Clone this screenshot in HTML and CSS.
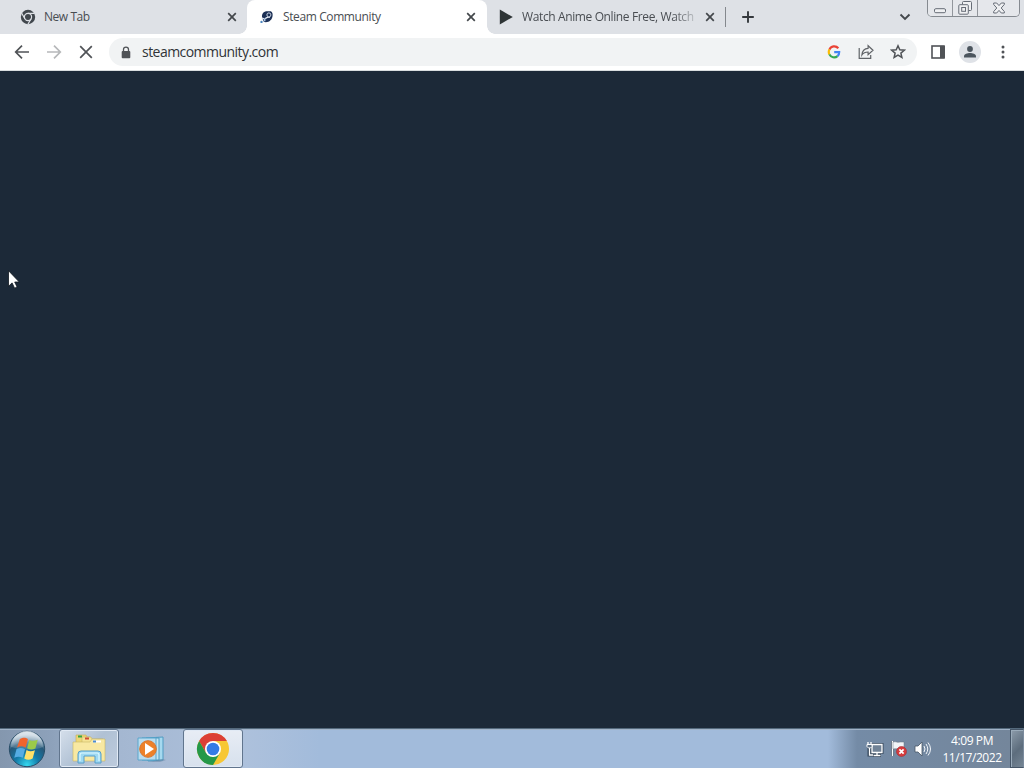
FILE: index.html
```html
<!DOCTYPE html>
<html lang="en">
<head>
<meta charset="utf-8">
<title>Steam Community</title>
<link rel="stylesheet" href="styles.css">
</head>
<body>
<div class="desktop">
  <header class="tabstrip">
    <div class="tab tab-first">
      <svg class="favicon" viewBox="0 0 16 16"><circle cx="8" cy="8" r="7.2" fill="#41474d"/><circle cx="8" cy="8" r="3.6" fill="none" stroke="#dee1e6" stroke-width="1.2"/><path d="M8 4.4h6.5M4.9 9.8L1.7 4.3M11.1 9.8L7.9 15.3" stroke="#dee1e6" stroke-width="1.2"/><circle cx="8" cy="8" r="2.3" fill="#41474d"/></svg>
      <span class="tab-title title-new">New Tab</span>
      <svg class="tab-close" viewBox="0 0 10 10"><path d="M1.2 1.2l7.6 7.6M8.8 1.2L1.2 8.8"/></svg>
    </div>
    <div class="tab tab-active">
      <svg class="favicon" viewBox="0 0 16 16"><path d="M3 8C2.800 4.400 5 2.300 8 2.300h3.800c1.500.8 2 2.300 1.800 4.200-.3 4-3.100 6.700-6.800 6.700-1 0-1.700-.3-2.300-1z" fill="#1b2f55"/><path d="M2.600 9l3 .9 3.200-1.700 2.200-.2" fill="none" stroke="#e5ecf5" stroke-width="1.300"/><circle cx="9.900" cy="5.900" r="2" fill="#1b2f55" stroke="#dce4f0" stroke-width=".9"/><circle cx="5.600" cy="11" r="1.200" fill="#dce6f2" stroke="#395d91" stroke-width=".7"/><circle cx="2.500" cy="12.900" r="1.200" fill="#4c85bd"/></svg>
      <span class="tab-title title-steam">Steam Community</span>
      <svg class="tab-close" viewBox="0 0 10 10"><path d="M1.2 1.2l7.6 7.6M8.8 1.2L1.2 8.8"/></svg>
    </div>
    <div class="tab tab-last">
      <svg class="favicon" viewBox="0 0 16 16"><path d="M1.800.5v15L14.800 8z" fill="#2e3436"/></svg>
      <span class="tab-title title-anime">Watch Anime Online Free, Watch</span>
      <svg class="tab-close" viewBox="0 0 10 10"><path d="M1.2 1.2l7.6 7.6M8.8 1.2L1.2 8.8"/></svg>
    </div>
    <span class="tab-divider"></span>
    <svg class="new-tab" viewBox="0 0 14 14"><path d="M7 1.2v11.6M1.2 7h11.6"/></svg>
    <svg class="tab-search" viewBox="0 0 12 8"><path d="M1.5 1.5L6 6l4.5-4.5"/></svg>
    <div class="window-buttons">
      <span class="wb wb-min"><svg width="14" height="6" viewBox="0 0 14 6"><rect x="1.5" y=".7" width="11" height="4" rx="1.3"/></svg></span>
      <span class="wb wb-max"><svg width="14" height="14" viewBox="0 0 14 14"><path d="M4.5 3.5v-2a1 1 0 0 1 1-1h7a1 1 0 0 1 1 1v7a1 1 0 0 1-1 1h-2"/><rect x=".8" y="3.7" width="9.500" height="9.500" rx="1"/><rect x="3.700" y="6.500" width="3.800" height="3.800"/></svg></span>
      <span class="wb wb-close"><svg width="12" height="12" viewBox="0 0 12 12"><path d="M.7 1h3L6 3.6 8.3 1h3v1.5L8.2 6l3.1 3.5V11h-3L6 8.4 3.7 11h-3V9.500L3.800 6 .7 2.500z"/></svg></span>
    </div>
  </header>

  <nav class="toolbar">
    <svg class="nav-icon" viewBox="0 0 16 16"><path d="M15 8H2M8 1.700L1.700 8 8 14.300"/></svg>
    <svg class="nav-icon nav-disabled" viewBox="0 0 16 16"><path d="M1 8h13M8 1.700L14.300 8 8 14.300"/></svg>
    <svg class="nav-icon" viewBox="0 0 16 16"><path d="M2.200 2.200l11.600 11.600M13.800 2.200L2.200 13.800"/></svg>
    <div class="omnibox">
      <svg class="lock" viewBox="0 0 10 13"><path d="M2.500 5.500V3.600a2.500 2.500 0 0 1 5 0v1.900" fill="none" stroke="#505357" stroke-width="1.300"/><rect x=".7" y="4.900" width="8.600" height="7.300" rx="1" fill="#505357"/></svg>
      <span class="url">steamcommunity.com</span>
      <svg class="google" viewBox="0 0 14 14"><g fill="none" stroke-width="2.200"><path d="M11.300 3.300A5.200 5.200 0 0 0 2.400 4.600" stroke="#ea4335"/><path d="M2.400 4.600a5.200 5.200 0 0 0 0 4.800" stroke="#fbbc05"/><path d="M2.400 9.400a5.200 5.200 0 0 0 8.100 1.700" stroke="#34a853"/><path d="M7.200 7.100h5a5.200 5.200 0 0 1-1.700 4" stroke="#4285f4"/></g></svg>
      <svg class="share" viewBox="0 0 16 16"><path d="M1.200 4v10.300h11.500v-3.200M3.900 11c.3-4.200 2.500-6.500 6.200-6.700V1.700L15 6.200l-4.900 4.400V8C7.200 8 5.300 8.900 3.900 11z"/></svg>
      <svg class="star" viewBox="0 0 16 16"><path d="M8 1.800l1.800 4 4.500.4-3.400 2.900 1 4.400L8 11.200l-3.900 2.300 1-4.400-3.400-2.900 4.500-.4z"/></svg>
    </div>
    <svg class="side-panel" viewBox="0 0 14 14"><rect x="1" y="1" width="12" height="12" fill="none" stroke="#505357" stroke-width="1.600"/><path d="M9 1h5v12H9z" fill="#505357"/></svg>
    <span class="avatar"><svg width="14" height="14" viewBox="0 0 14 14"><circle cx="7" cy="4" r="2.900" fill="#4c555e"/><path d="M1 12.500v-1.300C1 9.100 4.500 8 7 8s6 1.100 6 3.200v1.300z" fill="#4c555e"/></svg></span>
    <svg class="menu" viewBox="0 0 4 14"><circle cx="2" cy="2" r="1.500"/><circle cx="2" cy="7" r="1.500"/><circle cx="2" cy="12" r="1.500"/></svg>
  </nav>

  <main class="page"></main>

  <footer class="taskbar">
    <svg class="start" viewBox="0 0 38 38">
      <defs><radialGradient id="orb" cx=".5" cy=".95" r=".85"><stop offset="0" stop-color="#35d8ef"/><stop offset=".4" stop-color="#137aa8"/><stop offset=".75" stop-color="#275878"/><stop offset="1" stop-color="#9eb7ca"/></radialGradient><linearGradient id="gloss" x2="0" y2="1"><stop stop-color="#fff" stop-opacity=".7"/><stop offset="1" stop-color="#fff" stop-opacity=".1"/></linearGradient></defs>
      <circle cx="19" cy="19" r="17.700" fill="url(#orb)" stroke="#294e68"/>
      <path d="M3 17a16 16 0 0 1 32 0c-9 4-22 3-32 0z" fill="url(#gloss)"/>
      <g transform="translate(-2.500 -2.500) scale(1.150)">
      <path d="M12.500 10c3-1.800 5-1.300 7 0l-2 7.500c-2.500-1.500-4.700-1.500-7.500-.2z" fill="#f0642d"/>
      <path d="M20.700 10.800c2.500 1.200 4.700 1 7.300-.2L26 18.200c-2.700 1.400-4.800 1.200-7.200-.1z" fill="#9bcb4a"/>
      <path d="M9.600 18.800c3-1.400 5-1.100 7.400.2l-2 7.400c-2.400-1.400-4.700-1.400-7.400-.1z" fill="#55ace3"/>
      <path d="M18.300 19.600c2.400 1.400 4.600 1.400 7.300.1l-2 7.200c-2.700 1.500-5 1.400-7.300 0z" fill="#ffe168"/>
      </g>
    </svg>
    <div class="task task-explorer">
      <svg width="34" height="32" viewBox="0 0 34 32"><path d="M4 6V2h10l1 2h3v22H4z" fill="#eed777" stroke="#c6ad58" stroke-width=".6"/><path d="M10 8V4h9l1 2h11v21H10z" fill="#f5e394" stroke="#c8b565" stroke-width=".6"/><path d="M1 9h17l2-3h13v22H1z" fill="#f8e8a2" stroke="#c8b565" stroke-width=".6"/><path d="M6 2.500h4v2H6z" fill="#37a344"/><path d="M13 4.500h4v2h-4z" fill="#ce4a35"/><path d="M21 7.500h8v2h-8z" fill="#fff"/><path d="M21 7.500h3v2h-3z" fill="#4c8bd0"/><path d="M6 30V21q0-3 3-3h17q3 0 3 3v9h-6v-7H12v7z" fill="#9ed9f2" stroke="#549dca"/><path d="M8 28v-6q0-2 2-2h15q2 0 2 2v6" fill="none" stroke="#dcf8ff" stroke-width="1.200"/></svg>
    </div>
    <svg class="media" viewBox="0 0 30 28"><path d="M9 3l17-1v23l-15 1z" fill="#a6d9ef" stroke="#4e9bc2"/><path d="M5 3h17v22H5z" fill="#c4e5f2" stroke="#4e9bc2"/><path d="M1 3h18v22H1z" fill="#b9dcef" stroke="#5aa6cc"/><circle cx="11" cy="14" r="8.300" fill="#ed8129" stroke="#d9762e"/><path d="M8 8l9 6-9 6z" fill="#fff"/><path d="M25 24l4 1-6 2H12z" fill="#6384a4" opacity=".5"/></svg>
    <div class="task task-chrome">
      <svg width="34" height="34" viewBox="0 0 34 34"><circle cx="17" cy="17" r="16" fill="#f7c735"/><path d="M3.140 9A16 16 0 0 1 30.860 9H17L10.070 21z" fill="#dc3f35"/><path d="M3.140 9A16 16 0 0 0 17 33l6.930-12-6.930 4-6.930-4z" fill="#259849"/><circle cx="17" cy="17" r="8" fill="#fff"/><circle cx="17" cy="17" r="6.300" fill="#347be5"/></svg>
    </div>
    <div class="tray">
      <svg class="tray-network" viewBox="0 0 18 16"><path d="M6 3.500h10v8H6zM11 12v2M7 14.500h8M3 5v9h4" fill="none" stroke="#34465a" stroke-width="3"/><path d="M6 3.500h10v8H6z" fill="#718397" stroke="#fff" stroke-width="1.300"/><path d="M11 12v2M7.500 14.500h7M3.500 7v7H7M2 1v3M5 1v3" fill="none" stroke="#fff" stroke-width="1.300"/><path d="M1 3.500h5v2L4.500 7h-2L1 5.500z" fill="#607286" stroke="#fff"/></svg>
      <svg class="tray-flag" viewBox="0 0 18 18"><path d="M2.500 1v15" stroke="#34465a" stroke-width="3"/><path d="M2.500 1v15" stroke="#fff" stroke-width="1.600"/><path d="M3 2c3-1 4 1 7 0h4v7c-4 1-6-1-11 0z" fill="#f1f5f8" stroke="#677480" stroke-width=".5"/><circle cx="11.500" cy="11.500" r="5" fill="#d63b3c" stroke="#a62c34" stroke-width=".6"/><path d="M9.400 9.400l4.200 4.200M13.600 9.400l-4.200 4.200" stroke="#fff" stroke-width="1.700"/></svg>
      <svg class="tray-sound" viewBox="0 0 18 16"><path d="M1 5h3l4-4v14l-4-4H1z" fill="#fff" stroke="#465666" stroke-width=".8"/><path d="M10 5q2 3 0 6M12 3q3.500 5 0 10M14 1.500q5 6.500 0 13" fill="none" stroke="#f2f6fa"/></svg>
      <div class="clock"><span>4:09 PM</span><span class="date">11/17/2022</span></div>
    </div>
    <span class="show-desktop"></span>
  </footer>
</div>
<svg class="cursor" viewBox="0 0 12 19"><path d="M.5.7v15.600l3.600-3.400 2.500 5.300 2.500-1.200-2.400-5h4.600z" fill="#fff" stroke="#101820" stroke-width=".8"/></svg>
</body>
</html>
```

FILE: styles.css
```css
* { box-sizing: border-box; }
body { margin: 0; overflow: hidden; font-family: "Open Sans", "Noto Sans", sans-serif; }
svg { display: block; flex: none; }
.desktop { width: 1024px; height: 768px; display: flex; flex-direction: column; }
.tabstrip { height: 34px; flex: none; display: flex; background: #dee1e6; }
.tab { height: 34px; display: flex; align-items: center; flex: none; color: #494d52; }
.tab-first { width: 247px; padding: 0 10px 0 20px; }
.tab-active { width: 240px; padding: 0 11px 0 12px; background: #fff; border-radius: 8px 8px 0 0; position: relative; }
.tab-active::before, .tab-active::after { content: ""; position: absolute; bottom: 0; width: 8px; height: 8px; }
.tab-active::before { left: -8px; background: radial-gradient(circle at 0 0, transparent 7.500px, #fff 8px); }
.tab-active::after { right: -8px; background: radial-gradient(circle at 100% 0, transparent 7.500px, #fff 8px); }
.tab-last { width: 238px; padding: 0 10px 0 11px; }
.favicon { width: 16px; height: 16px; margin-right: 8px; }
.tab-title { font-size: 12px; line-height: 18px; white-space: nowrap; overflow: hidden; flex: none; }
.title-new { width: 180px; letter-spacing: -.45px; }
.title-steam { width: 180px; letter-spacing: -.39px; }
.title-anime { width: 175px; margin-right: 7px; letter-spacing: -.38px; -webkit-mask-image: linear-gradient(90deg, #000 86%, rgba(0, 0, 0, .15)); mask-image: linear-gradient(90deg, #000 86%, rgba(0, 0, 0, .15)); }
.tab-close { width: 10px; height: 10px; margin-left: auto; fill: none; stroke: #43474b; stroke-width: 1.7; }
.tab-divider { width: 1px; height: 20px; margin-top: 7px; background: #84888d; }
.new-tab { width: 14px; height: 14px; margin: 10px 0 0 15px; fill: none; stroke: #34383c; stroke-width: 1.9; }
.tab-search { width: 12px; height: 8px; margin: 13px 0 0 144px; fill: none; stroke: #44484c; stroke-width: 1.9; }
.window-buttons { width: 93px; height: 17px; margin-left: 16px; display: flex; border: 1px solid #858a90; border-top: 0; border-radius: 0 0 5px 5px; overflow: hidden; }
.wb { height: 16px; display: flex; justify-content: center; align-items: center; background: #e5e7eb; border-right: 1px solid #92969c; }
.wb svg { fill: #eff0f2; stroke: #666c76; stroke-width: 1; }
.wb-min { width: 25px; padding-top: 5px; }
.wb-max { width: 25px; }
.wb-close { width: 41px; border: 0; }
.toolbar { height: 37px; flex: none; padding-left: 14px; display: flex; align-items: center; background: #fff; border-bottom: 1px solid #d9dddf; }
.nav-icon { width: 16px; height: 16px; margin-right: 16px; fill: none; stroke: #505357; stroke-width: 1.7; }
.nav-disabled { stroke: #b6b8ba; }
.omnibox { width: 808px; height: 28px; margin-left: -1px; display: flex; align-items: center; border-radius: 14px; background: #f1f3f4; padding-left: 12px; }
.lock { width: 10px; height: 13px; margin-right: 11px; }
.url { width: 685px; font-size: 14px; line-height: 20px; letter-spacing: -.54px; color: #303337; white-space: nowrap; }
.google { width: 14px; height: 14px; }
.share { width: 16px; height: 16px; margin-left: 17px; fill: none; stroke: #606367; stroke-width: 1.2; }
.star { width: 16px; height: 16px; margin-left: 16px; fill: none; stroke: #505357; stroke-width: 1.5; }
.side-panel { width: 14px; height: 14px; margin-left: 14px; }
.avatar { width: 22px; height: 22px; margin-left: 14px; display: flex; align-items: center; justify-content: center; border-radius: 50%; background: #dfe2e7; }
.menu { width: 4px; height: 14px; margin-left: 20px; fill: #505357; }
.page { flex: 1; background: #1c2938; }
.taskbar { height: 40px; flex: none; display: flex; align-items: center; border-top: 1px solid #54697c; box-shadow: inset 0 1px #a1b3c8; background: linear-gradient(90deg, #8497ae 0, #8da1ba 50px, #a4b7d1 120px, #adc1dc 245px, #a2bbdb 320px, #a2bbdb 828px, #748ba6 857px, #74869b 1010px); }
.start { width: 38px; height: 38px; margin-left: 8px; }
.task { width: 60px; height: 39px; display: flex; align-items: center; justify-content: center; border: 1px solid #61758d; border-radius: 3px; box-shadow: inset 0 0 0 1px #e1eaf5; }
.task-explorer { margin-left: 13px; background: linear-gradient(135deg, #d5dfeb, #b0c1d4 50%, #bdcbdd); }
.media { width: 30px; height: 28px; margin-left: 18px; }
.task-chrome { margin-left: 16px; background: linear-gradient(#e8edf5, #d7e1ed); }
.tray { height: 39px; margin-left: auto; display: flex; align-items: center; color: #fff; }
.tray-network { width: 18px; height: 16px; }
.tray-flag { width: 18px; height: 18px; margin-left: 6px; }
.tray-sound { width: 18px; height: 16px; margin-left: 6px; }
.clock { width: 76px; margin-left: 2px; display: flex; flex-direction: column; align-items: center; font-size: 12px; line-height: 17px; letter-spacing: -.4px; white-space: nowrap; }
.date { letter-spacing: -.45px; }
.show-desktop { width: 14px; height: 39px; border: 1px solid #455567; border-right-color: #7b8b9d; box-shadow: inset 1px 1px #9aabba; background: linear-gradient(135deg, #8d9cab, #5d6d7d 55%, #758594); }
.cursor { position: absolute; left: 8px; top: 270px; width: 12px; height: 19px; }
```
